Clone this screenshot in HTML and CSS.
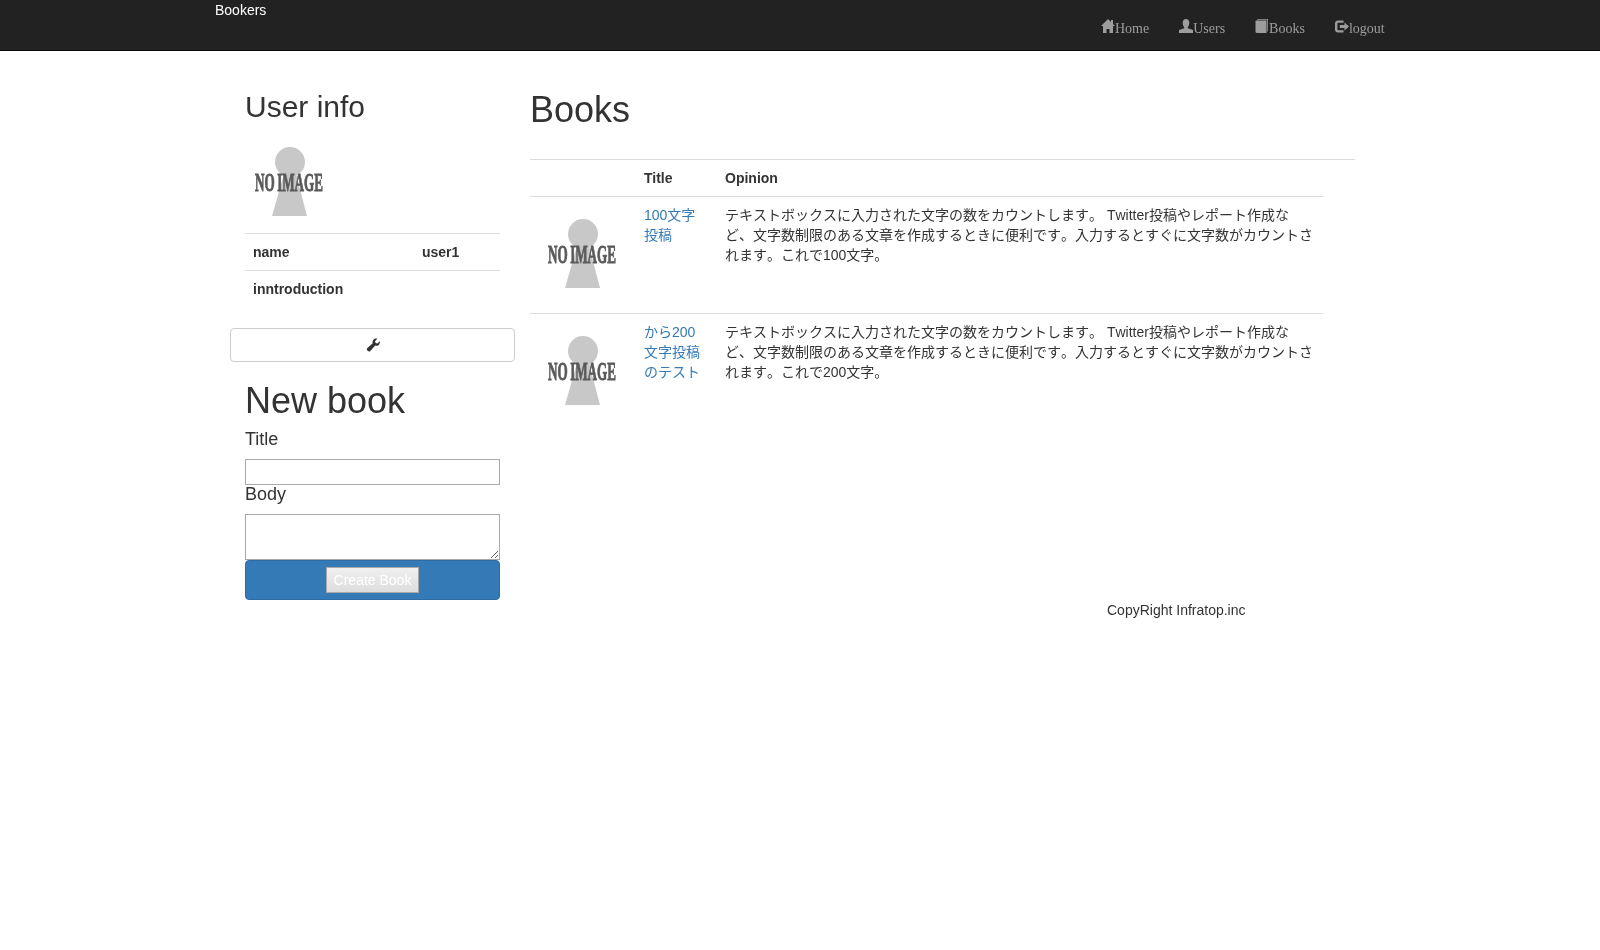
FILE: index.html
```html
<!DOCTYPE html>
<html lang="ja">
<head>
    <meta charset="UTF-8">
    <title>Bookers</title>
    <link rel="stylesheet" href="styles.css">
</head>
<body>
    <svg class="defs" width="0" height="0">
        <symbol id="noimage" viewBox="0 0 90 100">
            <circle cx="45" cy="28" r="15" fill="#c8c8c8"/>
            <path d="M39 40h12l11 42H27z" fill="#c8c8c8"/>
            <text x="10" y="57" class="noimage-text" textLength="68" lengthAdjust="spacingAndGlyphs">NO IMAGE</text>
        </symbol>
    </svg>

    <nav class="navbar">
        <a class="brand" href="#">Bookers</a>
        <ul class="nav-links">
            <li><a href="#"><svg class="icon" viewBox="0 0 14 14"><path d="M7 0l3 2.900V1h2v3.900L14 7h-2v7H8.500V10h-3v4H2V7H0z"/></svg>Home</a></li>
            <li><a href="#"><svg class="icon" viewBox="0 0 14 14"><path d="M7 0c2.100 0 3.300 1.700 3.300 3.900 0 1.800-.7 3.200-1.500 4v1.400L14 11v3H0v-3l5.200-1.700V7.900c-.8-.8-1.500-2.200-1.500-4C3.700 1.700 4.900 0 7 0z"/></svg>Users</a></li>
            <li><a href="#"><svg class="icon" viewBox="0 0 14 14"><path d="M.5 2.500C.5 1.700 1 1.500 1.500 1.500H11.500V14H1.800C1 14 .5 13.500 .5 12.800z"/><path d="M2 0h11v12.500h-.8V.8H2z"/></svg>Books</a></li>
            <li><a href="#"><svg class="icon" viewBox="0 0 14 14"><path d="M3 1.500h5.500v2.200H3.200C2.700 3.700 2.400 4.100 2.400 4.600v5.800c0 .5.300.9.800.9h5.300v2.200H3c-1.700 0-3-1.300-3-3V4.500c0-1.700 1.300-3 3-3z"/><path d="M4.800 6h4.700V3.500L14 7.500l-4.500 4V9H4.800z"/></svg>logout</a></li>
        </ul>
    </nav>

    <div class="container">
        <aside class="side">
            <div class="side-inner">
                <h2>User info</h2>
                <svg class="noimage"><use href="#noimage"/></svg>
                <table class="info-table">
                    <tr><th>name</th><th class="info-value">user1</th></tr>
                    <tr><th>inntroduction</th><th></th></tr>
                </table>
            </div>
            <a class="btn-edit" href="#"><svg class="icon-wrench" viewBox="0 0 14 14"><path d="M13.600 3.200c.5 1.600 0 3.100-1.200 4-1 .7-2.200.8-3.200.4L4.300 13c-.7.7-1.700.7-2.300.1l-.8-.8c-.6-.6-.5-1.500.2-2.200l5.300-4.800c-.4-1.100-.2-2.300.6-3.300C8.300.8 9.800.3 11.300.7L9 3.200l.6 1.900 1.900.5z"/></svg></a>
            <form class="side-inner book-form">
                <h1>New book</h1>
                <label for="title">Title</label>
                <input type="text" id="title">
                <label for="body" class="label-body">Body</label>
                <textarea id="body"></textarea>
                <div class="submit-bar">
                    <input class="submit" type="button" value="Create Book">
                </div>
            </form>
        </aside>

        <main class="content">
            <h1>Books</h1>
            <hr>
            <table class="books">
                <thead>
                    <tr><th class="col-img"></th><th class="col-title">Title</th><th>Opinion</th></tr>
                </thead>
                <tbody>
                    <tr>
                        <td class="cell-img"><svg class="noimage"><use href="#noimage"/></svg></td>
                        <td><a href="#">100文字投稿</a></td>
                        <td class="cell-opinion">テキストボックスに入力された文字の数をカウントします。 Twitter投稿やレポート作成など、文字数制限のある文章を作成するときに便利です。入力するとすぐに文字数がカウントされます。これで100文字。</td>
                    </tr>
                    <tr>
                        <td class="cell-img"><svg class="noimage"><use href="#noimage"/></svg></td>
                        <td><a href="#">から200文字投稿のテスト</a></td>
                        <td class="cell-opinion">テキストボックスに入力された文字の数をカウントします。 Twitter投稿やレポート作成など、文字数制限のある文章を作成するときに便利です。入力するとすぐに文字数がカウントされます。これで200文字。</td>
                    </tr>
                </tbody>
            </table>
        </main>
    </div>

    <footer class="footer">CopyRight Infratop.inc</footer>
</body>
</html>
```

FILE: styles.css
```css
* {
    box-sizing: border-box;
}
body {
    margin: 0;
    font-family: "Liberation Sans", "Noto Sans CJK JP", sans-serif;
    font-size: 14px;
    line-height: 20px;
    color: #333;
    background: #fff;
}
a {
    color: #337ab7;
    text-decoration: none;
}
.defs {
    position: absolute;
}
/* own layer, text comes out grey instead of colour fringed */
.brand,
.nav-links,
.container,
.footer {
    will-change: transform;
}
.navbar {
    display: flex;
    justify-content: space-between;
    height: 51px;
    padding: 0 215px;
    background: #222;
    border-bottom: 1px solid #080808;
}
.brand {
    color: #fff;
}
.nav-links {
    display: flex;
    gap: 30px;
    margin: 0;
    padding: 19px 0 0;
    list-style: none;
    font-family: "Liberation Serif", serif;
}
.nav-links a {
    display: flex;
    align-items: flex-start;
    color: #9d9d9d;
}
.icon {
    width: 14px;
    height: 14px;
    fill: #9d9d9d;
}
.container {
    display: flex;
    width: 1140px;
    margin: 20px auto 0;
}
.side {
    width: 285px;
    flex: none;
}
.side-inner {
    padding: 0 15px;
}
.side h2 {
    margin: 19px 0 11px;
    font-size: 30px;
    font-weight: 500;
    line-height: 33px;
}
h1 {
    margin: 19px 0 8px;
    font-size: 36px;
    font-weight: 500;
    line-height: 40px;
}
.noimage {
    display: block;
    width: 90px;
    height: 100px;
}
.noimage-text {
    font-family: "Liberation Serif", serif;
    font-size: 25px;
    font-weight: 700;
    word-spacing: -1.5px;
    fill: #5a5a5a;
    stroke: #5a5a5a;
    stroke-width: 0.9px;
}
.info-table {
    width: 100%;
    margin: -1px 0 21px;
    border-collapse: collapse;
}
.info-table th {
    padding: 8px;
    border-top: 1px solid #ddd;
    text-align: left;
}
.info-value {
    width: 86px;
}
.btn-edit {
    display: flex;
    align-items: center;
    justify-content: center;
    height: 34px;
    background: #fff;
    border: 1px solid #ccc;
    border-radius: 4px;
}
.icon-wrench {
    width: 14px;
    height: 14px;
    fill: #333;
}
.book-form label {
    display: block;
    margin-bottom: 10px;
    font-size: 18px;
}
.book-form .label-body {
    margin-top: -1px;
    margin-bottom: 10px;
}
.book-form input[type="text"],
.book-form textarea {
    display: block;
    width: 100%;
    margin: 0;
    background: #fff;
    border: 1px solid #a9a9a9;
    border-radius: 0;
}
.book-form input[type="text"] {
    height: 26px;
}
.book-form textarea {
    height: 46px;
}
.submit-bar {
    display: flex;
    align-items: center;
    justify-content: center;
    height: 40px;
    background: #337ab7;
    border: 1px solid #2e6da4;
    border-radius: 4px;
}
.submit {
    width: 93px;
    height: 26px;
    padding: 0;
    font-family: "Liberation Sans", sans-serif;
    font-size: 14px;
    color: #fff;
    background: linear-gradient(#f0f0f0, #ddd);
    border: 1px solid #a9a9a9;
}
.content {
    flex: 1;
    padding: 0 15px;
}
.content hr {
    margin: 29px 0 0;
    border: 0;
    border-top: 1px solid #ddd;
}
.books {
    width: 793px;
    table-layout: fixed;
    border-collapse: collapse;
}
.books th,
.books td {
    padding: 8px;
    text-align: left;
    vertical-align: top;
}
.books th {
    border-bottom: 1px solid #ddd;
}
.books td {
    border-bottom: 1px solid #ddd;
}
.books tr:last-child td {
    border-bottom: 0;
}
.books .cell-img {
    padding-top: 9px;
    padding-bottom: 7px;
}
.books .cell-opinion {
    font-kerning: none;
    line-break: loose;
}
.col-img {
    width: 106px;
}
.col-title {
    width: 81px;
}
.footer {
    padding-left: 1107px;
    font-kerning: none;
}
```
